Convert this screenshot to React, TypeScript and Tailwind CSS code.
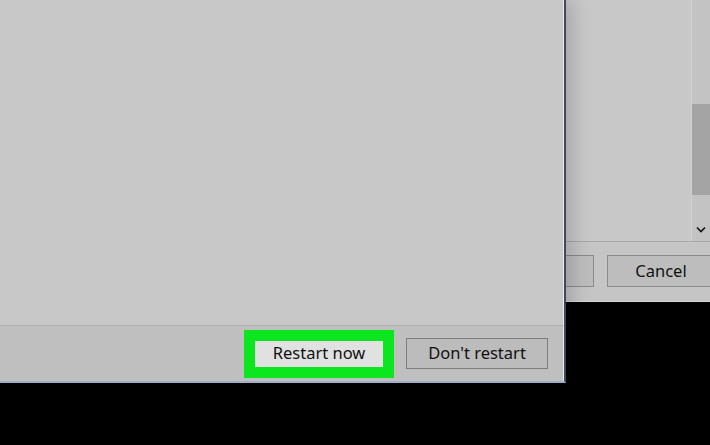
import React from 'react';

const font = { fontFamily: '"Noto Sans", "Open Sans", sans-serif' };

const App: React.FC = () => {
  return (
    <div className="w-[710px] h-[445px] bg-black overflow-hidden" style={font}>
      <div className="flex items-start">
        {/* front dialog */}
        <div className="relative z-10 w-[566px] h-[383px] flex flex-col bg-[#c8c8c8] border-r-2 border-b-2 border-r-[#3f4a58] border-b-[#9fb0c8] shadow-[6px_0_18px_rgba(0,0,0,0.18)]">
          <div className="flex-1 border-b border-[#adadad] border-r border-r-[#e4ecf4]"></div>
          <div className="h-[55px] bg-[#bfbfbf] border-r border-r-[#e4ecf4] flex items-center justify-end gap-[12px] pr-[15px]">
            <div className="border-[11px] border-[#0be61e] bg-[#0be61e]">
              <button className="w-[128px] h-[26px] bg-[#e1e1e1] text-[16.5px] leading-none text-[#111]">
                Restart now
              </button>
            </div>
            <button className="w-[142px] h-[31px] bg-[#bcbcbc] border border-[#7d7d7d] text-[16.5px] leading-none text-[#111]">
              Don't restart
            </button>
          </div>
        </div>

        {/* window behind */}
        <div className="flex-1 h-[302px] flex flex-col bg-[#c8c8c8] overflow-hidden border-b border-[#d6d6d6]">
          <div className="flex-1 flex justify-end">
            <div className="w-[19px] h-[241px] bg-[#c3c3c3] border-l border-[#d0d0d0] flex flex-col">
              <div className="h-[104px]"></div>
              <div className="h-[91px] bg-[#a4a4a4]"></div>
              <div className="flex-1 flex items-end justify-center pb-[8px]">
                <svg width="10" height="7" viewBox="0 0 10 7" fill="none">
                  <path d="M1 1.5L5 5.5L9 1.5" stroke="#111" strokeWidth="1.6" />
                </svg>
              </div>
            </div>
          </div>
          <div className="h-[61px] border-t border-[#a8a8a8] bg-[#c5c5c5] flex items-start gap-[13px] pt-[13px]">
            <div className="shrink-0 ml-[-60px] w-[88px] h-[32px] bg-[#bdbdbd] border border-[#8a8a8a]"></div>
            <button className="shrink-0 w-[110px] h-[32px] bg-[#bdbdbd] border border-[#8a8a8a] text-[16.5px] leading-none text-[#111] pr-[2px]">
              Cancel
            </button>
          </div>
        </div>
      </div>
    </div>
  );
};

export default App;
